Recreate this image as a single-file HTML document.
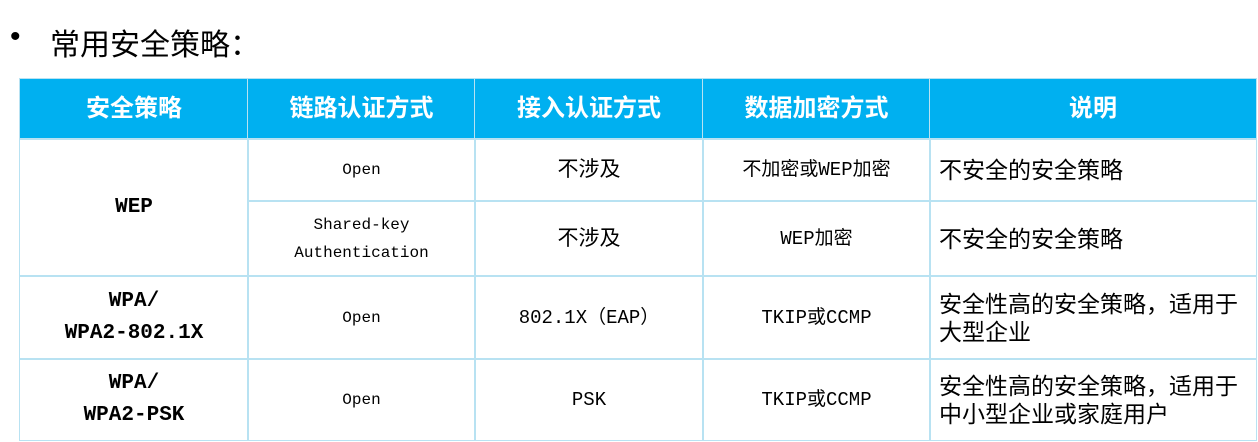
<!DOCTYPE html><html><head><meta charset="utf-8"><style>
body{margin:0;width:1258px;height:442px;background:#fff;position:relative;overflow:hidden;font-family:"Liberation Sans","Noto Sans CJK SC",sans-serif;color:#000}
.t{position:absolute;left:50px;top:20px;font-size:30px}
.b{position:absolute;left:10px;top:20px;font-size:30px}
.c{position:absolute;box-sizing:border-box;border:1.5px solid #b8e2f2;display:flex;align-items:center;justify-content:center;text-align:center;font-size:21px;line-height:28px}
.h{background:#00b0f0;color:#fff;font-size:24px;font-weight:bold;border-color:#b8e2f2}
.m{font-family:"Liberation Mono","Noto Sans CJK SC",monospace;font-size:19px}
.s{font-size:16px}
.l{justify-content:flex-start;text-align:left;padding-left:9px;font-size:23px}
.w{font-weight:bold;font-size:21px}
</style></head><body>
<div class="b">•</div><div class="t">常用安全策略：</div>
<div class="c h" style="left:19px;top:78px;width:230px;height:62px">安全策略</div>
<div class="c h" style="left:247px;top:78px;width:229px;height:62px">链路认证方式</div>
<div class="c h" style="left:474px;top:78px;width:230px;height:62px">接入认证方式</div>
<div class="c h" style="left:702px;top:78px;width:229px;height:62px">数据加密方式</div>
<div class="c h" style="left:929px;top:78px;width:328px;height:62px">说明</div>

<div class="c m w" style="left:19px;top:138px;width:230px;height:139px">WEP</div>
<div class="c m s" style="left:247px;top:138px;width:229px;height:64px">Open</div>
<div class="c" style="left:474px;top:138px;width:230px;height:64px">不涉及</div>
<div class="c m" style="left:702px;top:138px;width:229px;height:64px">不加密或WEP加密</div>
<div class="c l" style="left:929px;top:138px;width:328px;height:64px">不安全的安全策略</div>

<div class="c m s" style="left:247px;top:200px;width:229px;height:77px">Shared-key<br>Authentication</div>
<div class="c" style="left:474px;top:200px;width:230px;height:77px">不涉及</div>
<div class="c m" style="left:702px;top:200px;width:229px;height:77px">WEP加密</div>
<div class="c l" style="left:929px;top:200px;width:328px;height:77px">不安全的安全策略</div>

<div class="c m w" style="left:19px;top:275px;width:230px;height:85px;line-height:32px">WPA/<br>WPA2-802.1X</div>
<div class="c m s" style="left:247px;top:275px;width:229px;height:85px">Open</div>
<div class="c m" style="left:474px;top:275px;width:230px;height:85px">802.1X（EAP）</div>
<div class="c m" style="left:702px;top:275px;width:229px;height:85px">TKIP或CCMP</div>
<div class="c l" style="left:929px;top:275px;width:328px;height:85px">安全性高的安全策略，适用于<br>大型企业</div>

<div class="c m w" style="left:19px;top:358px;width:230px;height:83px;line-height:32px">WPA/<br>WPA2-PSK</div>
<div class="c m s" style="left:247px;top:358px;width:229px;height:83px">Open</div>
<div class="c m" style="left:474px;top:358px;width:230px;height:83px">PSK</div>
<div class="c m" style="left:702px;top:358px;width:229px;height:83px">TKIP或CCMP</div>
<div class="c l" style="left:929px;top:358px;width:328px;height:83px">安全性高的安全策略，适用于<br>中小型企业或家庭用户</div>
</body></html>
